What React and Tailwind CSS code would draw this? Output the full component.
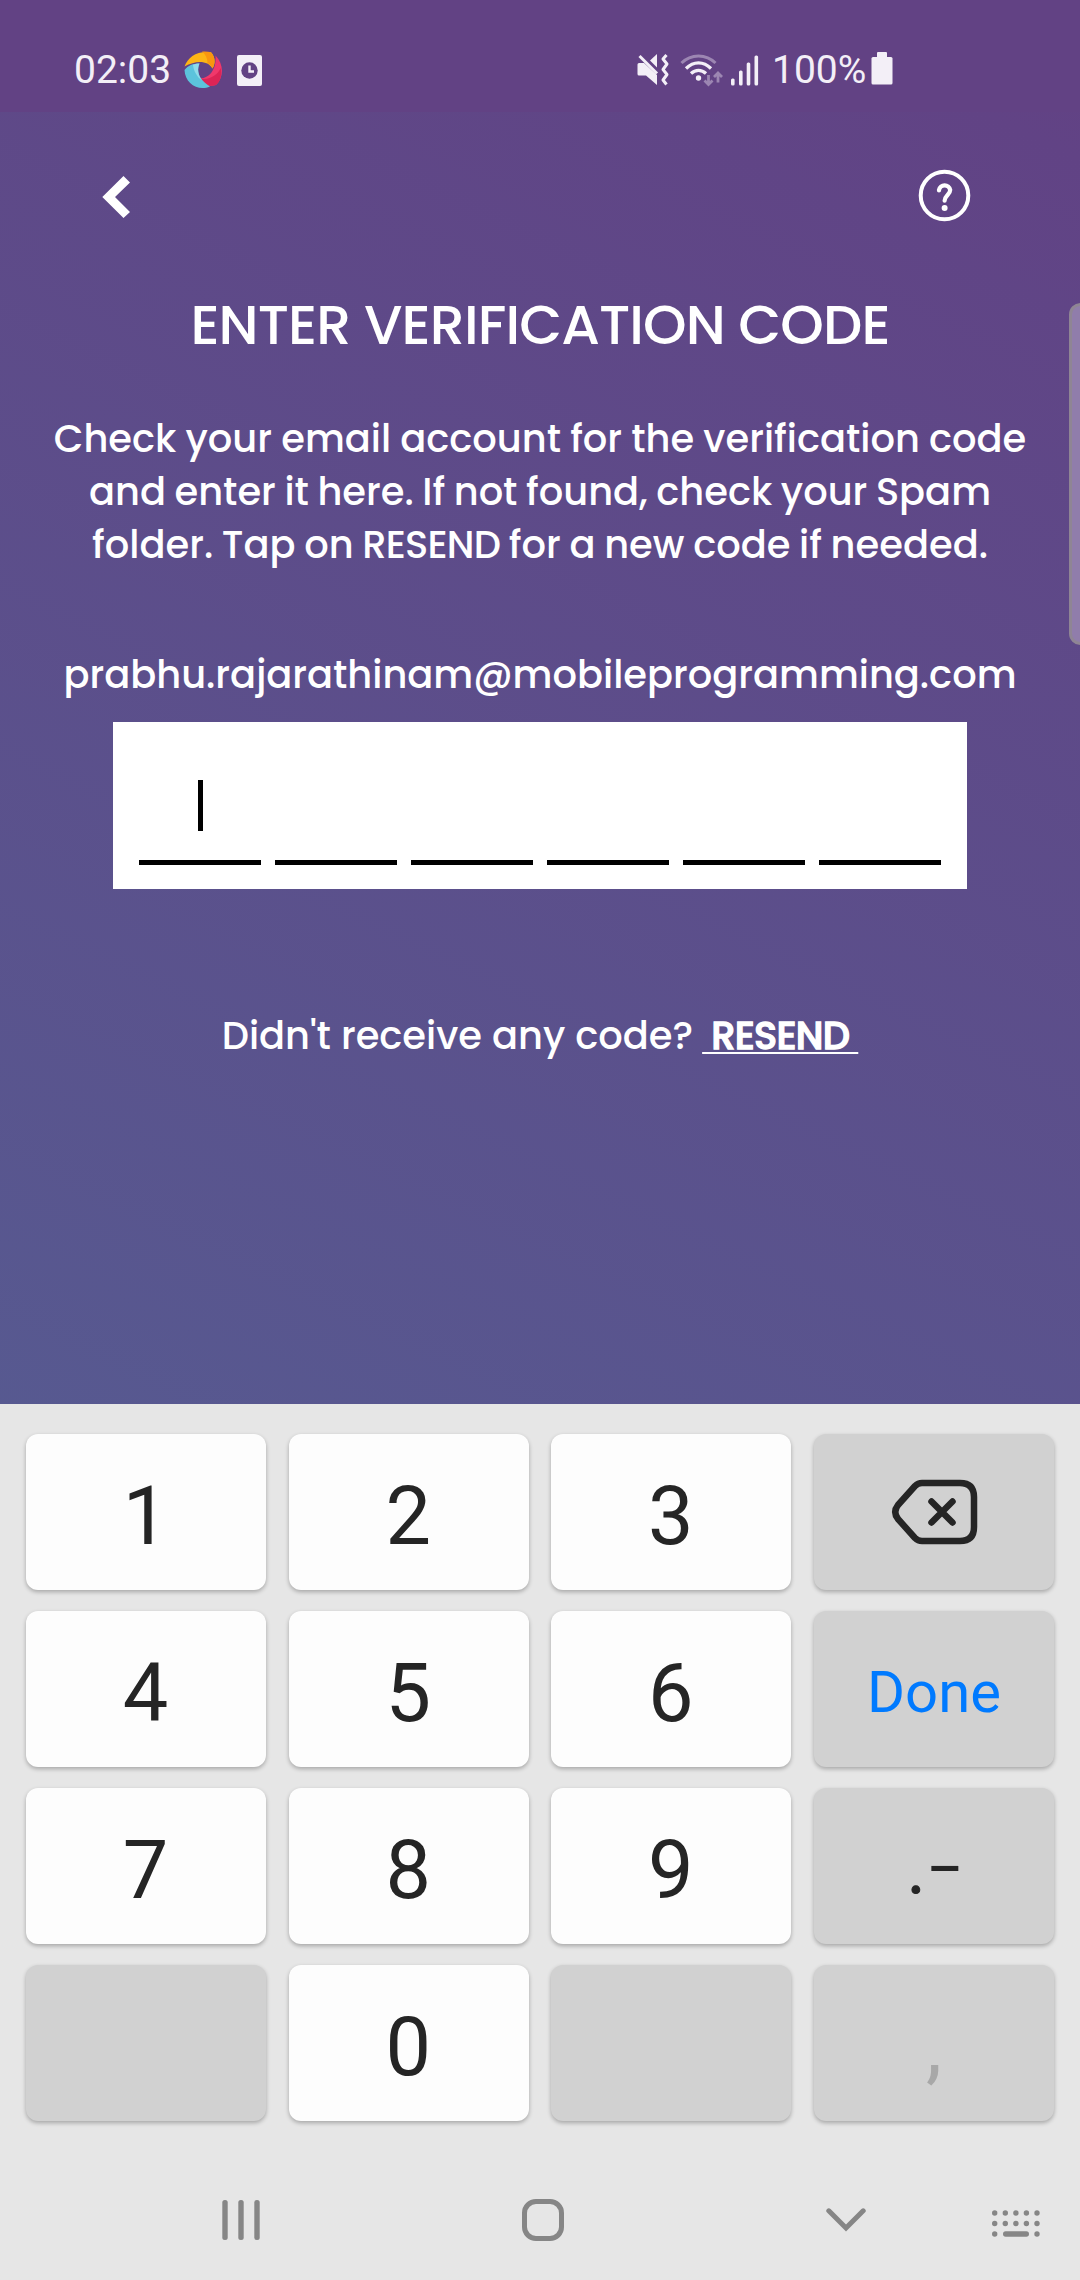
import React from "react";

const POPPINS = "font-['Poppins','Inter',sans-serif] [font-feature-settings:'cv11']";

function PinwheelIcon() {
  return (
    <svg className="ml-[15px] h-[38px] w-[38px]" viewBox="0 0 38 38">
      <path d="M0.5 15.5C4 6 13 -0.5 27 1.2C31.5 6 31.5 13 28.5 17.5C24 9.5 12 9 0.5 15.5Z" fill="#fdb515" />
      <path d="M18 0.6Q23 0.2 27 1.2C31.5 6 31.5 13 28.5 17.5C27.5 15 25.5 13 23.5 12C23.5 7 21.5 3.5 18 0.6Z" fill="#f9960f" />
      <path d="M31.5 4.5C40 13 40 26 32 34C26 36.5 18 33 15 27C24 28.5 33 19 31.5 4.5Z" fill="#f0386b" />
      <path d="M15 27C24 30 33 25 36.8 17C38 25 36 31 32 34C26 36.5 18 33 15 27Z" fill="#dc2456" />
      <path d="M0.5 19C4 14.5 9 12.5 15.5 12.5C12 20 15 29 26 35.5C14 40.5 1 32.5 0.5 19Z" fill="#5cc3dc" />
      <path d="M9 13.8Q12 12.5 15.5 12.5C13 18 14 24 18 29.5C13 26 9.5 20 9 13.8Z" fill="#8fdbe9" />
    </svg>
  );
}

function ClockCardIcon() {
  return (
    <svg className="ml-[15px] h-[31px] w-[25px]" viewBox="0 0 25 31">
      <rect width="25" height="31" rx="2" fill="#f3eff7" />
      <circle cx="12.5" cy="15.5" r="8.2" fill="#624284" />
      <path d="M12.5 10.5V16.5H17" fill="none" stroke="#f3eff7" strokeWidth="2.4" />
    </svg>
  );
}

function MuteIcon() {
  return (
    <svg className="h-[32px] w-[32px]" viewBox="0 0 32 32" fill="#f3eff7">
      <path d="M0.5 10.5Q0.5 9 2 9H7L20 21V31L9 21.5H2Q0.5 21.5 0.5 20Z" />
      <path d="M13 6.5L20 0V13.5Z" />
      <path d="M2.5 2L20 19.5" stroke="#f3eff7" strokeWidth="3" />
      <path d="M29.5 1L26 5L30 10L26 15.5L30 20.5L26 26L29.5 30.5" fill="none" stroke="#f3eff7" strokeWidth="3" strokeLinejoin="round" />
    </svg>
  );
}

function WifiIcon() {
  return (
    <svg className="ml-[11px] h-[33px] w-[43px]" viewBox="0 0 43 33" fill="none">
      <path d="M1.5 9C11 -0.5 26 -0.5 35.5 9" stroke="#9c86b2" strokeWidth="3" />
      <path d="M6 14.5C13.5 7 23.5 7 31 14.5" stroke="#f3eff7" strokeWidth="3.2" />
      <path d="M11 19.5C15.5 15.2 21.5 15.2 26 19.5" stroke="#f3eff7" strokeWidth="3.2" />
      <circle cx="18.5" cy="24" r="2.7" fill="#f3eff7" />
      <path d="M28.5 21V30M24.5 26.5L28.5 30.5L32.5 26.5M38 28.5V19M34 23L38 19L42 23" stroke="#9c86b2" strokeWidth="2.8" />
    </svg>
  );
}

function SignalIcon() {
  return (
    <svg className="ml-[8px] h-[31px] w-[28px]" viewBox="0 0 28 31" fill="#f3eff7">
      <rect x="0" y="23.5" width="3.6" height="7" rx="1.5" />
      <rect x="8" y="15.5" width="3.6" height="15" rx="1.5" />
      <rect x="15.7" y="7.5" width="3.6" height="23" rx="1.5" />
      <rect x="23.5" y="0.5" width="3.6" height="30" rx="1.5" />
    </svg>
  );
}

function StatusBar() {
  return (
    <div className="flex h-[112px] items-start bg-[#624284] pt-[29px] pl-[74px] font-['Roboto',sans-serif] text-[39px] leading-none text-[#f3eff7]">
      <div className="flex w-[563px] items-start">
        <span className="mt-[22px] w-[95px] whitespace-nowrap">02:03</span>
        <div className="flex h-[82px] items-center">
          <PinwheelIcon />
          <ClockCardIcon />
        </div>
      </div>
      <div className="flex items-start">
        <div className="flex h-[82px] items-center">
          <MuteIcon />
          <WifiIcon />
          <SignalIcon />
        </div>
        <span className="mt-[22px] ml-[13px] whitespace-nowrap">100%</span>
        <svg className="mt-[23px] ml-[5px] h-[33px] w-[22px]" viewBox="0 0 22 33" fill="#f3eff7">
          <rect x="6" y="0" width="10" height="7" rx="1" />
          <rect x="0.5" y="5" width="21" height="27.5" rx="1.5" />
        </svg>
      </div>
    </div>
  );
}

function Key({ label, dark, className = "", children }) {
  return (
    <button
      className={
        "flex h-[156px] items-center justify-center rounded-[12px] leading-none shadow-[0_2px_4px_rgba(0,0,0,0.28)] " +
        (dark ? "bg-[#d1d1d1] " : "bg-[#fdfdfd] ") +
        className
      }
    >
      {children || label}
    </button>
  );
}

function Keyboard() {
  const digit = "text-[81px] text-[#252525] pt-[9px] pr-[1px]";
  return (
    <div className="h-[876px] bg-[#e6e6e6] pt-[30px] font-['Roboto',sans-serif]">
      <div className="mx-[26px] grid grid-cols-[repeat(4,240px)] justify-between gap-y-[21px]">
        <Key label="1" className={digit} />
        <Key label="2" className={digit} />
        <Key label="3" className={digit} />
        <Key dark className="pl-[1px]">
          <svg className="h-[66px] w-[87px]" viewBox="0 0 87 66" fill="none" stroke="#252525" strokeLinecap="round" strokeLinejoin="round">
            <path d="M31 4H69Q83 4 83 18V48Q83 62 69 62H31Q27 62 24 59L7 40Q1.5 33 7 26L24 7Q27 4 31 4Z" strokeWidth="6.5" />
            <path d="M40.5 22.5L61.5 43.5M61.5 22.5L40.5 43.5" strokeWidth="6.5" />
          </svg>
        </Key>
        <Key label="4" className={digit} />
        <Key label="5" className={digit} />
        <Key label="6" className={digit} />
        <Key label="Done" dark className="pt-[5px] text-[58px] text-[#007aff]" />
        <Key label="7" className={digit} />
        <Key label="8" className={digit} />
        <Key label="9" className={digit} />
        <Key dark className="pt-[6px] pl-[1px] text-[70px] text-[#252525]">
          <span className="flex items-baseline">
            <span className="[-webkit-text-stroke:1px_#252525]">.</span>
            <span className="relative -top-[6px] ml-[2px] text-[54px] leading-none font-medium">–</span>
          </span>
        </Key>
        <Key dark />
        <Key label="0" className={digit} />
        <Key dark />
        <Key label="," dark className="pt-[7px] text-[81px] text-[#a8a8a8]" />
      </div>
      <div className="mt-[76px] flex h-[46px] items-center pl-[222px]">
        <svg className="h-[40px] w-[38px]" viewBox="0 0 38 40" fill="#868686">
          <rect x="0.3" width="5.4" height="40" rx="2.5" />
          <rect x="16.3" width="5.4" height="40" rx="2.5" />
          <rect x="32.3" width="5.4" height="40" rx="2.5" />
        </svg>
        <div className="ml-[262px] h-[42px] w-[42px] rounded-[14px] border-[5px] border-[#868686]" />
        <svg className="ml-[262px] h-[24px] w-[40px]" viewBox="0 0 40 24" fill="none">
          <path d="M2.8 2.8L20 20L37.2 2.8" stroke="#868686" strokeWidth="5" strokeLinecap="round" />
        </svg>
        <svg className="mt-[8px] ml-[126px] h-[28px] w-[49px]" viewBox="0 0 49 28" fill="#868686">
          {[2.7, 13.3, 23.9, 34.4, 45].map((x) => (
            <React.Fragment key={x}>
              <circle cx={x} cy="3" r="2.7" />
              <circle cx={x} cy="13.5" r="2.7" />
            </React.Fragment>
          ))}
          <circle cx="2.7" cy="24" r="2.7" />
          <rect x="11" y="21.3" width="26" height="5.4" rx="2.7" />
          <circle cx="45" cy="24" r="2.7" />
        </svg>
      </div>
    </div>
  );
}

export default function App() {
  return (
    <div className="relative h-[2280px] w-[1080px] overflow-hidden bg-[linear-gradient(205.35deg,#624184,#526496)] text-white">
      <div className="flex h-[1404px] flex-col">
        <StatusBar />
        <header className="flex h-[168px] items-start justify-between pt-[57px] pr-[109px] pl-[102px]">
          <svg className="mt-[7px] h-[42px] w-[28px]" viewBox="0 0 28 42" fill="white">
            <path d="M0.3 21L21.5 0L28 6.5L13 21L28 36L21.5 42Z" />
          </svg>
          <svg className="h-[53px] w-[53px]" viewBox="0 0 53 53" fill="none" stroke="white">
            <circle cx="26.5" cy="26.5" r="23.8" strokeWidth="4" />
            <path d="M21 21.4V21A5.7 5.7 0 0 1 32.2 21C32.2 25.5 26.6 26.5 26.6 31.7" strokeWidth="4.2" strokeLinecap="round" />
            <circle cx="26.6" cy="39" r="3" fill="white" stroke="none" />
          </svg>
        </header>
        <main className={"flex flex-col items-center font-medium whitespace-nowrap " + POPPINS}>
          <h1 className="mt-[10px] h-[70px] text-[55.5px] leading-[70px] tracking-[-0.9px]">ENTER VERIFICATION CODE</h1>
          <p className="mt-[52px] text-[38.4px] leading-[53px] [word-spacing:-0.8px]">Check your email account for the verification code</p>
          <p className="text-[38.4px] leading-[53px] [word-spacing:-1.4px]">and enter it here. If not found, check your Spam</p>
          <p className="text-[38.4px] leading-[53px] [word-spacing:-1.3px]">
            folder. Tap on <span className="tracking-[-0.8px]">RESEND</span> for a new code if needed.
          </p>
          <p className="mt-[77px] text-[38.4px] leading-[53px]">prabhu.rajarathinam@mobileprogramming.com</p>
          <div className="mt-[21px] flex h-[167px] w-[854px] justify-between bg-white px-[26px]">
            {[0, 1, 2, 3, 4, 5].map((i) => (
              <div key={i} className="mb-[24px] flex w-[122px] items-start justify-center border-b-[5px] border-black pt-[58px]">
                {i === 0 && <div className="h-[51px] w-[5px] bg-black" />}
              </div>
            ))}
          </div>
          <p className="mt-[120px] text-[38.4px] leading-[53px]">
            Didn't receive any code?
            <span className="ml-[9px] tracking-[-0.8px] underline decoration-2 underline-offset-[3px] [-webkit-text-stroke:1.3px_white] [text-decoration-skip-ink:none]">
              &nbsp;RESEND&nbsp;
            </span>
          </p>
        </main>
      </div>
      <Keyboard />
      <div className="absolute top-[303px] -right-[12px] h-[342px] w-[23px] rounded-[12px] border-[3px] border-[#8f8594] bg-[#907dab]" />
    </div>
  );
}
